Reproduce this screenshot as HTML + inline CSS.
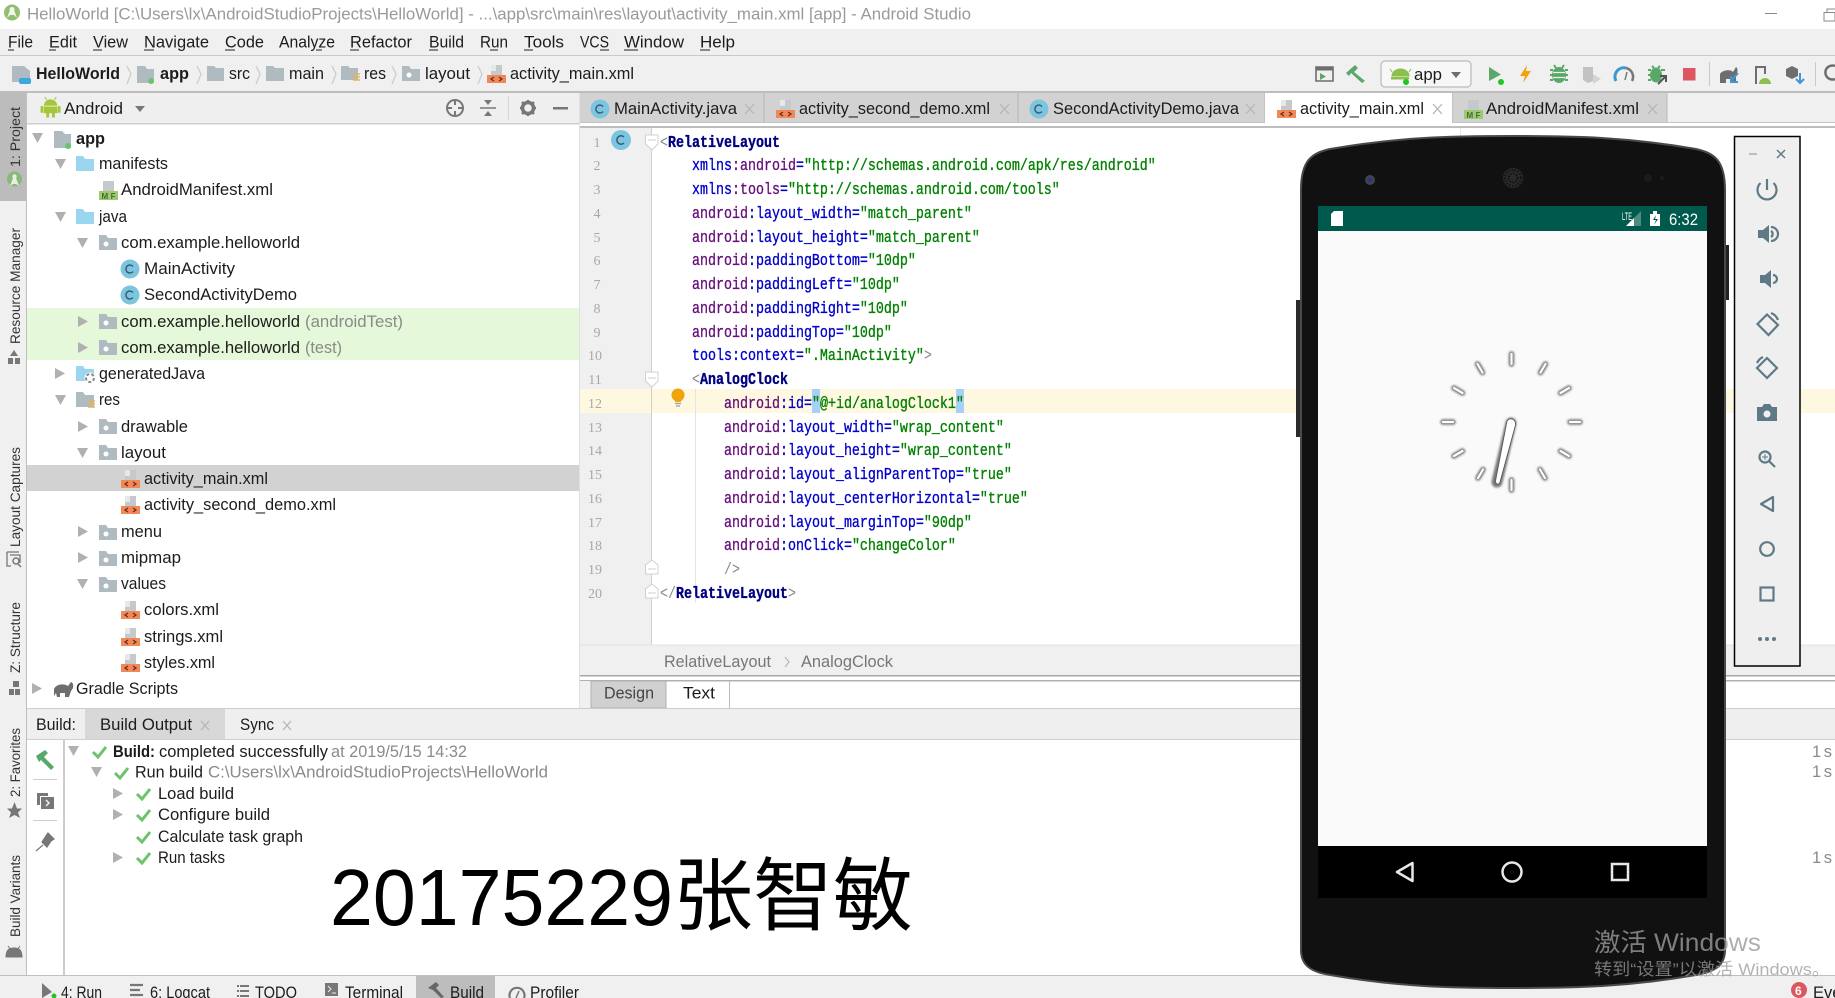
<!DOCTYPE html>
<html><head><meta charset="utf-8"><title>HelloWorld - Android Studio</title>
<style>
html,body{margin:0;padding:0;background:#fff;overflow:hidden}
svg{display:block}
text{font-family:"Liberation Sans","Noto Sans CJK SC",sans-serif;font-size:16.5px;fill:#1c1c1c;white-space:pre}
text:not(.v):not(.ln):not(.k){transform:translateY(-1px)}
.g{fill:#8a8a8a}
.t{font-size:17px}
.b{font-weight:bold}
.ln{font-family:"Liberation Serif",serif;font-size:14px;fill:#a8a8a8;text-anchor:middle}
.v{font-size:14px;fill:#333}
.code text{font-family:"Liberation Mono",monospace;font-size:17px;fill:#000;stroke-width:.35}
.p{fill:#660e7a;stroke:#660e7a}.l{fill:#0000c8;stroke:#0000c8}.s{fill:#008000;stroke:#008000}.n{fill:#000080;stroke:#000080;font-weight:bold}.y{fill:#888;stroke:none}
.x{stroke:#b5b5b5;stroke-width:1.3;fill:none}
.e{fill:none;stroke:#5f7a87;stroke-width:2.2}
.ef{fill:#5f7a87}
</style></head><body>
<svg width="1835" height="998" viewBox="0 0 1835 998" xmlns="http://www.w3.org/2000/svg">
<defs>
<filter id="bl" x="-50%" y="-50%" width="200%" height="200%"><feGaussianBlur stdDeviation="1.1"/></filter>
<g id="dn"><path d="M0 0H11L5.5 10Z" fill="#b0b0b0"/></g>
<g id="rt"><path d="M0 0L10 5.5L0 11Z" fill="#b0b0b0"/></g>
<g id="pk"><path d="M0 0H7L9 3H18V15H0Z" fill="#afbac1"/><circle cx="7" cy="9" r="2.5" fill="#fff"/></g>
<g id="bf"><path d="M0 0H7L9 3H18V15H0Z" fill="#9bd6f0"/></g>
<g id="xm"><path d="M4 0H15V10H4Z" fill="#c6c9cc"/><path d="M9 0H4V6H9Z" fill="#e6e8ea"/><path d="M0 10H19V18H0Z" fill="#f0885a"/><path d="M7 12L4 14L7 16M12 12L15 14L12 16" stroke="#6b2a10" stroke-width="1.2" fill="none"/></g>
<g id="ck"><path d="M1 7L6 12L14 2" stroke="#6cc36b" stroke-width="3" fill="none"/></g>
<g id="cc"><circle r="9.5" fill="#7cc5e0"/><path d="M3 -2.5A4 4 0 1 0 3 2.5" stroke="#3a5a68" stroke-width="1.4" fill="none"/></g>
<g id="an"><path d="M1 7A7 6.5 0 0 1 15 7Z"/><path d="M1 8H15V15H1Z"/><path d="M-2 8H0V14H-2ZM16 8H18V14H16ZM4 15H6V19H4ZM10 15H12V19H10ZM4 1L2 -2M12 1L14 -2" stroke="currentColor" stroke-width="1"/></g>
</defs>

<!-- base -->
<rect width="1835" height="998" fill="#fff"/>
<rect y="29" width="1835" height="64" fill="#f0f0f0"/>
<rect y="55" width="1835" height="1" fill="#c9c9c9"/>
<rect y="91" width="1835" height="2" fill="#bdbdbd"/>

<!-- title -->
<circle cx="12" cy="12.500" r="8" fill="#8fbf6f"/><path d="M7 18L10 10H14L17 18L14 15H10Z" fill="#f2f7ee"/><circle cx="12" cy="9.500" r="2.500" fill="#f2f7ee"/>
<text x="27" y="20.500" textLength="944" lengthAdjust="spacingAndGlyphs" style="fill:#9a9a9a">HelloWorld [C:\Users\lx\AndroidStudioProjects\HelloWorld] - ...\app\src\main\res\layout\activity_main.xml [app] - Android Studio</text>
<rect x="1765" y="13" width="12" height="1" fill="#888"/>
<path d="M1824 12.500H1835V21H1824ZM1827 12V9H1835" fill="none" stroke="#888"/>

<!-- menu -->
<g>
<text x="8" y="48.500" textLength="25" lengthAdjust="spacingAndGlyphs">File</text>
<text x="49" y="48.500" textLength="28" lengthAdjust="spacingAndGlyphs">Edit</text>
<text x="93" y="48.500" textLength="35" lengthAdjust="spacingAndGlyphs">View</text>
<text x="144" y="48.500" textLength="65" lengthAdjust="spacingAndGlyphs">Navigate</text>
<text x="225" y="48.500" textLength="39" lengthAdjust="spacingAndGlyphs">Code</text>
<text x="279" y="48.500" textLength="56" lengthAdjust="spacingAndGlyphs">Analyze</text>
<text x="350" y="48.500" textLength="62" lengthAdjust="spacingAndGlyphs">Refactor</text>
<text x="429" y="48.500" textLength="35" lengthAdjust="spacingAndGlyphs">Build</text>
<text x="480" y="48.500" textLength="28" lengthAdjust="spacingAndGlyphs">Run</text>
<text x="524" y="48.500" textLength="40" lengthAdjust="spacingAndGlyphs">Tools</text>
<text x="580" y="48.500" textLength="29" lengthAdjust="spacingAndGlyphs">VCS</text>
<text x="624" y="48.500" textLength="60" lengthAdjust="spacingAndGlyphs">Window</text>
<text x="700" y="48.500" textLength="35" lengthAdjust="spacingAndGlyphs">Help</text>
<path d="M8 50H14M49 50H56M93 50H102M144 50H154M225 50H235M316 50H322M350 50H359M429 50H438M490 50H498M524 50H533M600 50H609M624 50H638M700 50H710" stroke="#222"/>
</g>

<!-- nav bar -->
<g>
<path d="M12 66H24L30 71V82H12Z" fill="#afbac1"/><rect x="19" y="78" width="12" height="6" rx="2" fill="#3fa7dd"/>
<text x="36" y="80" textLength="84" lengthAdjust="spacingAndGlyphs" class="b">HelloWorld</text>
<path d="M127 66L131 74L127 84" class="x" style="stroke:#ccc"/>
<path d="M137 66H145L147 69H154V83H137Z" fill="#afbac1"/><circle cx="151" cy="81" r="3" fill="#6cc36b"/>
<text x="160" y="80" textLength="29" lengthAdjust="spacingAndGlyphs" class="b">app</text>
<path d="M197 66L201 74L197 84" class="x" style="stroke:#ccc"/>
<path d="M207 66H214L216 68H224V81H207Z" fill="#afbac1"/>
<text x="229" y="80" textLength="21" lengthAdjust="spacingAndGlyphs">src</text>
<path d="M256 66L260 74L256 84" class="x" style="stroke:#ccc"/>
<path d="M266 66H273L275 68H284V81H266Z" fill="#afbac1"/>
<text x="289" y="80" textLength="35" lengthAdjust="spacingAndGlyphs">main</text>
<path d="M332 66L336 74L332 84" class="x" style="stroke:#ccc"/>
<path d="M341 66H348L350 68H358V80H341Z" fill="#afbac1"/><path d="M353 74H360M353 77H360M353 80H360" stroke="#e5b25c" stroke-width="1.500"/>
<text x="364" y="80" textLength="22" lengthAdjust="spacingAndGlyphs">res</text>
<path d="M392 66L396 74L392 84" class="x" style="stroke:#ccc"/>
<use href="#pk" x="402" y="66"/>
<text x="425" y="80" textLength="45" lengthAdjust="spacingAndGlyphs">layout</text>
<path d="M478 66L482 74L478 84" class="x" style="stroke:#ccc"/>
<use href="#xm" x="487" y="65"/>
<text x="510" y="80" textLength="124" lengthAdjust="spacingAndGlyphs">activity_main.xml</text>
</g>

<!-- toolbar right -->
<g>
<path d="M1316 67H1333V81H1316Z" fill="none" stroke="#6e6e6e" stroke-width="1.600"/><rect x="1316" y="67" width="17" height="3.500" fill="#6e6e6e"/><path d="M1320 73L1326 76.500L1320 80Z" fill="#59a869"/>
<path d="M1346 73L1355 65L1358 68L1354 72L1365 81L1362 83L1351 73L1349 76Z" fill="#59a869"/>
<rect x="1381" y="61" width="90" height="26" rx="4" fill="#f7f7f7" stroke="#c4c4c4" stroke-width="1.500"/>
<path d="M1392 76A8.500 7 0 0 1 1409 76Z M1392 72L1390 69M1409 72L1411 69" fill="#8cc04e" stroke="#8cc04e"/><rect x="1391" y="77" width="18" height="2.500" fill="#8cc04e"/><circle cx="1406" cy="82" r="3" fill="#22c522"/>
<text x="1414" y="81" textLength="28" lengthAdjust="spacingAndGlyphs" style="font-size:17px">app</text>
<path d="M1451 72H1461L1456 78Z" fill="#6e6e6e"/>
<path d="M1489 67L1501 74.500L1489 81Z" fill="#59a869"/><circle cx="1501" cy="82" r="3" fill="#22c522"/>
<path d="M1527 65L1520 76H1525L1523 83L1531 71H1526Z" fill="#f0a30a"/>
<ellipse cx="1559" cy="75" rx="7" ry="8" fill="#59a869"/><path d="M1550 70H1553M1565 70H1568M1550 75H1553M1565 75H1568M1550 80H1553M1565 80H1568M1554 65L1556 68M1564 65L1562 68" stroke="#59a869" stroke-width="2"/><path d="M1553 72.500H1565M1553 77.500H1565" stroke="#f0f0f0" stroke-width="1.200"/>
<path d="M1583 67H1593V81L1588 83L1583 80Z" fill="#c2c2c2"/><path d="M1593 74L1601 79L1593 84Z" fill="#d3d3d3"/>
<path d="M1616 81A9 9 0 0 1 1626 68" fill="none" stroke="#3c97d3" stroke-width="3"/><path d="M1626 68A9 9 0 0 1 1632 81" fill="none" stroke="#777" stroke-width="2.500"/><path d="M1625 80L1627 72" stroke="#777" stroke-width="1.500"/>
<ellipse cx="1656" cy="75" rx="6" ry="7.500" fill="#59a869"/><path d="M1648 70H1651M1661 70H1665M1648 75H1651M1648 80H1651M1652 66L1654 68M1660 66L1658 68" stroke="#59a869" stroke-width="2"/><path d="M1658 84L1665 77M1660 76H1666V82" stroke="#555" stroke-width="2" fill="none"/>
<rect x="1683" y="68" width="12.500" height="12.500" fill="#db5860"/>
<rect x="1709" y="62" width="1" height="24" fill="#c9c9c9"/>
<path d="M1720 83V74C1722 70 1731 69 1733 72L1736 67C1738 68 1738 72 1736 76V83H1732V79H1726V83Z" fill="#6e6e6e"/><path d="M1738 73L1731 81M1731 76V82H1738" stroke="#3c97d3" stroke-width="2" fill="none"/>
<path d="M1756 84V67H1765V74" fill="none" stroke="#6e6e6e" stroke-width="2"/><path d="M1759 84A6 6 0 0 1 1771 84Z" fill="#8cc04e"/>
<path d="M1786 69L1792 66L1798 69V76L1792 79L1786 76Z" fill="#6e6e6e"/><path d="M1800 73V83M1796 79L1800 83L1804 79" stroke="#3c97d3" stroke-width="2" fill="none"/>
<rect x="1815" y="62" width="1" height="24" fill="#c9c9c9"/>
<path d="M1835 66A7 7 0 1 0 1835 79" fill="none" stroke="#6e6e6e" stroke-width="2.500"/>
</g>

<!-- left strip -->
<rect y="93" width="27" height="882" fill="#f0f0f0"/>
<rect x="26" y="93" width="1" height="882" fill="#bfbfbf"/>
<rect y="93" width="26" height="108" fill="#bcbcbc"/>
<g>
<text class="v" transform="translate(20,167) rotate(-90)" textLength="60" lengthAdjust="spacingAndGlyphs">1: Project</text>
<circle cx="14.500" cy="179" r="7.500" fill="#8ab77a"/><path d="M10 186L13 178H16L19 186L16 184H13Z" fill="#e8efe2"/><circle cx="14.500" cy="176.500" r="2.200" fill="#e8efe2"/>
<text class="v" transform="translate(20,344) rotate(-90)" textLength="116" lengthAdjust="spacingAndGlyphs">Resource Manager</text>
<path d="M14 350L18 356H10ZM8 358H13V364H8ZM15 358H20V364H15Z" fill="#777"/>
<text class="v" transform="translate(20,547) rotate(-90)" textLength="100" lengthAdjust="spacingAndGlyphs">Layout Captures</text>
<path d="M7 552H19M7 552V566H11M10 555H20V563" fill="none" stroke="#777" stroke-width="1.300"/><circle cx="16" cy="561" r="3" fill="none" stroke="#777" stroke-width="1.500"/><path d="M18 564L21 567" stroke="#777" stroke-width="1.500"/>
<text class="v" transform="translate(20,673) rotate(-90)" textLength="71" lengthAdjust="spacingAndGlyphs">Z: Structure</text>
<path d="M13 681H19V687H13ZM9 689H14V695H9ZM15 689H20V695H15Z" fill="#777"/>
<text class="v" transform="translate(20,797) rotate(-90)" textLength="69" lengthAdjust="spacingAndGlyphs">2: Favorites</text>
<path d="M14.500 802L17 808.500H22L18 812.500L20 818L14.500 815L9 818L11 812.500L7 808.500H12Z" fill="#777"/>
<text class="v" transform="translate(20,937) rotate(-90)" textLength="82" lengthAdjust="spacingAndGlyphs">Build Variants</text>
<path d="M6 957C6 949 10 948 14 948C18 948 22 949 22 957Z M8 946L11 950M20 946L17 950" fill="#777" stroke="#777"/>
</g>

<!-- project panel header -->
<rect x="27" y="93" width="552" height="30" fill="#efefef"/>
<rect x="27" y="123" width="552" height="1.500" fill="#cfcfcf"/>
<g color="#a4c639" fill="#a4c639"><use href="#an" x="41" y="101" transform="translate(4 3) scale(.95)"/></g>
<text x="64" y="115" textLength="59" lengthAdjust="spacingAndGlyphs">Android</text>
<path d="M135 106H145L140 112Z" fill="#777"/>
<circle cx="455" cy="108" r="8" fill="none" stroke="#777" stroke-width="2"/><path d="M455 100V105M455 111V116M447 108H452M458 108H463" stroke="#777" stroke-width="2"/>
<path d="M480 108H496" stroke="#777" stroke-width="1.500"/><path d="M484 100H492L488 105ZM484 116H492L488 111Z" fill="#777"/>
<rect x="508" y="96" width="1" height="24" fill="#d5d5d5"/>
<circle cx="528" cy="108" r="5.500" fill="none" stroke="#777" stroke-width="3.500"/><path d="M528 100V103M528 113V116M520 108H523M533 108H536M522 102L524 104M532 112L534 114M534 102L532 104M524 112L522 114" stroke="#777" stroke-width="2.500"/>
<rect x="553" y="107" width="15" height="2.500" fill="#777"/>

<!-- tree rows bg -->
<rect x="27" y="308" width="552" height="52" fill="#e5f8d9"/>
<rect x="27" y="465" width="552" height="26" fill="#d2d2d2"/>

<!-- tree -->
<g class="tree">
<use href="#dn" x="32" y="133"/>
<path d="M54 131H62L65 134H71V148H54Z" fill="#afbac1"/><circle cx="68" cy="146" r="3" fill="#6cc36b"/>
<text class="t b" x="76" y="145" textLength="29" lengthAdjust="spacingAndGlyphs">app</text>
<use href="#dn" x="55" y="159"/><use href="#bf" x="76" y="156"/>
<text class="t" x="99" y="170" textLength="69" lengthAdjust="spacingAndGlyphs">manifests</text>
<path d="M103 181H114V192H103Z" fill="#c6c9cc"/><rect x="99" y="191" width="19" height="9" fill="#9cca72"/>
<text class="k" x="101.500" y="199" style="font-size:8px;font-weight:bold;fill:#4a6b2d" textLength="14">MF</text>
<text class="t" x="121" y="196" textLength="152" lengthAdjust="spacingAndGlyphs">AndroidManifest.xml</text>
<use href="#dn" x="55" y="212"/><use href="#bf" x="76" y="209"/>
<text class="t" x="99" y="223" textLength="28" lengthAdjust="spacingAndGlyphs">java</text>
<use href="#dn" x="77" y="238"/><use href="#pk" x="99" y="235"/>
<text class="t" x="121" y="249" textLength="179" lengthAdjust="spacingAndGlyphs">com.example.helloworld</text>
<use href="#cc" x="130" y="269"/>
<text class="t" x="144" y="275" textLength="91" lengthAdjust="spacingAndGlyphs">MainActivity</text>
<use href="#cc" x="130" y="295"/>
<text class="t" x="144" y="301" textLength="153" lengthAdjust="spacingAndGlyphs">SecondActivityDemo</text>
<use href="#rt" x="78" y="316"/><use href="#pk" x="99" y="314"/>
<text class="t" x="121" y="328" textLength="179" lengthAdjust="spacingAndGlyphs">com.example.helloworld</text>
<text class="t g" x="305" y="328" textLength="98" lengthAdjust="spacingAndGlyphs">(androidTest)</text>
<use href="#rt" x="78" y="342"/><use href="#pk" x="99" y="340"/>
<text class="t" x="121" y="354" textLength="179" lengthAdjust="spacingAndGlyphs">com.example.helloworld</text>
<text class="t g" x="305" y="354" textLength="37" lengthAdjust="spacingAndGlyphs">(test)</text>
<use href="#rt" x="55" y="368"/><use href="#bf" x="76" y="366"/><circle cx="90" cy="378" r="5.500" fill="#fff"/><circle cx="90" cy="378" r="4" fill="none" stroke="#888" stroke-width="2" stroke-dasharray="3 2"/>
<text class="t" x="99" y="380" textLength="106" lengthAdjust="spacingAndGlyphs">generatedJava</text>
<use href="#dn" x="55" y="395"/><path d="M76 392H83L85 395H94V407H76Z" fill="#afbac1"/><path d="M88 401H95M88 404H95M88 407H95" stroke="#e5b25c" stroke-width="1.500"/>
<text class="t" x="99" y="406" textLength="21" lengthAdjust="spacingAndGlyphs">res</text>
<use href="#rt" x="78" y="421"/><use href="#pk" x="99" y="419"/>
<text class="t" x="121" y="433" textLength="67" lengthAdjust="spacingAndGlyphs">drawable</text>
<use href="#dn" x="77" y="448"/><use href="#pk" x="99" y="445"/>
<text class="t" x="121" y="459" textLength="45" lengthAdjust="spacingAndGlyphs">layout</text>
<use href="#xm" x="121" y="470"/>
<text class="t" x="144" y="485" textLength="124" lengthAdjust="spacingAndGlyphs">activity_main.xml</text>
<use href="#xm" x="121" y="496"/>
<text class="t" x="144" y="511" textLength="192" lengthAdjust="spacingAndGlyphs">activity_second_demo.xml</text>
<use href="#rt" x="78" y="526"/><use href="#pk" x="99" y="525"/>
<text class="t" x="121" y="538" textLength="41" lengthAdjust="spacingAndGlyphs">menu</text>
<use href="#rt" x="78" y="552"/><use href="#pk" x="99" y="551"/>
<text class="t" x="121" y="564" textLength="60" lengthAdjust="spacingAndGlyphs">mipmap</text>
<use href="#dn" x="77" y="579"/><use href="#pk" x="99" y="577"/>
<text class="t" x="121" y="590" textLength="45" lengthAdjust="spacingAndGlyphs">values</text>
<use href="#xm" x="121" y="601"/>
<text class="t" x="144" y="616" textLength="75" lengthAdjust="spacingAndGlyphs">colors.xml</text>
<use href="#xm" x="121" y="628"/>
<text class="t" x="144" y="643" textLength="79" lengthAdjust="spacingAndGlyphs">strings.xml</text>
<use href="#xm" x="121" y="654"/>
<text class="t" x="144" y="669" textLength="71" lengthAdjust="spacingAndGlyphs">styles.xml</text>
<use href="#rt" x="32" y="683"/>
<path d="M54 696V689C56 684 64 683 68 686L71 682C74 683 74 688 71 691L69 697H65V693H60V697H57L56 693Z" fill="#6e6e6e"/>
<text class="t" x="76" y="695" textLength="102" lengthAdjust="spacingAndGlyphs">Gradle Scripts</text>
</g>

<!-- editor tabs -->
<rect x="579" y="93" width="1256" height="30" fill="#f0f0f0"/>
<rect x="579" y="93" width="1" height="615" fill="#e0e0e0"/>
<rect x="580" y="93" width="184" height="29" fill="#d2d2d2"/>
<rect x="764" y="93" width="254" height="29" fill="#d2d2d2"/>
<rect x="1018" y="93" width="247" height="29" fill="#d2d2d2"/>
<rect x="1452" y="93" width="215" height="29" fill="#d2d2d2"/>
<path d="M764 93V122M1018 93V122M1265 93V122M1452 93V122M1667 93V122" stroke="#b5b5b5"/>
<rect x="580" y="122" width="1255" height="1" fill="#c4c4c4"/>
<rect x="580" y="126" width="1255" height="2" fill="#bdbdbd"/>
<rect x="1265" y="93" width="187" height="33" fill="#fff"/>
<use href="#cc" x="600" y="109"/>
<text x="614" y="115" textLength="123" lengthAdjust="spacingAndGlyphs" class="t">MainActivity.java</text>
<path d="M745 104L754 114M754 104L745 114" class="x"/>
<use href="#xm" x="776" y="100"/>
<text x="799" y="115" textLength="191" lengthAdjust="spacingAndGlyphs" class="t">activity_second_demo.xml</text>
<path d="M1000 104L1009 114M1009 104L1000 114" class="x"/>
<use href="#cc" x="1039" y="109"/>
<text x="1053" y="115" textLength="186" lengthAdjust="spacingAndGlyphs" class="t">SecondActivityDemo.java</text>
<path d="M1246 104L1255 114M1255 104L1246 114" class="x"/>
<use href="#xm" x="1277" y="100"/>
<text x="1300" y="115" textLength="124" lengthAdjust="spacingAndGlyphs" class="t">activity_main.xml</text>
<path d="M1433 104L1442 114M1442 104L1433 114" class="x"/>
<path d="M1468 100H1479V110H1468Z" fill="#c6c9cc"/><rect x="1464" y="110" width="19" height="9" fill="#9cca72"/>
<text class="k" x="1466.500" y="118" style="font-size:8px;font-weight:bold;fill:#4a6b2d" textLength="14">MF</text>
<text x="1486" y="115" textLength="153" lengthAdjust="spacingAndGlyphs" class="t">AndroidManifest.xml</text>
<path d="M1648 104L1657 114M1657 104L1648 114" class="x"/>

<!-- editor -->
<rect x="580" y="128" width="71" height="517" fill="#f0f0f0"/>
<rect x="651" y="128" width="1" height="517" fill="#d0d0d0"/>
<rect x="580" y="389" width="71" height="24" fill="#fff8e1"/>
<rect x="652" y="389" width="1183" height="24" fill="#fff8e1"/>
<rect x="1460" y="128" width="1" height="517" fill="#e8e8e8"/>
<rect x="695" y="389" width="1" height="214" fill="#e4e4e4"/>
<g>
<text class="ln" x="597" y="147">1</text><text class="ln" x="597" y="170">2</text><text class="ln" x="597" y="194">3</text><text class="ln" x="597" y="218">4</text><text class="ln" x="597" y="242">5</text><text class="ln" x="597" y="265">6</text><text class="ln" x="597" y="289">7</text><text class="ln" x="597" y="313">8</text><text class="ln" x="597" y="337">9</text><text class="ln" x="595" y="360">10</text><text class="ln" x="595" y="384">11</text><text class="ln" x="595" y="408">12</text><text class="ln" x="595" y="432">13</text><text class="ln" x="595" y="455">14</text><text class="ln" x="595" y="479">15</text><text class="ln" x="595" y="503">16</text><text class="ln" x="595" y="527">17</text><text class="ln" x="595" y="550">18</text><text class="ln" x="595" y="574">19</text><text class="ln" x="595" y="598">20</text>
</g>
<g><circle cx="621" cy="140" r="10" fill="#7cc5e0"/><path d="M624 137A4.200 4.200 0 1 0 624 143" stroke="#3a5a68" stroke-width="1.500" fill="none"/></g>
<g fill="#fff" stroke="#d0d0d0">
<path d="M645.500 135H658V144L652 150L645.500 144Z"/><path d="M648 140H656" />
<path d="M645.500 372H658V381L652 387L645.500 381Z"/><path d="M648 378H656"/>
<path d="M645.500 574H658V565L652 560L645.500 565Z"/><path d="M648 569H656"/>
<path d="M645.500 598H658V589L652 584L645.500 589Z"/><path d="M648 593H656"/>
</g>
<rect x="812" y="389" width="8" height="24" fill="#a6d0f7"/><rect x="956" y="389" width="8" height="24" fill="#a6d0f7"/>
<circle cx="678" cy="395" r="6.500" fill="#f0a30a"/><path d="M675 399H681V402H675Z" fill="#f0a30a"/><path d="M675 403.500H681M676 406H680" stroke="#999" stroke-width="1.300"/>

<g class="code" transform="translate(660,0) scale(.7843,1)">
<text class="k" y="147"><tspan class="y">&lt;</tspan><tspan class="n">RelativeLayout</tspan></text>
<text class="k" x="40.800" y="170"><tspan class="l">xmlns</tspan><tspan class="p">:android</tspan><tspan class="l">=</tspan><tspan class="s">"http://schemas.android.com/apk/res/android"</tspan></text>
<text class="k" x="40.800" y="194"><tspan class="l">xmlns</tspan><tspan class="p">:tools</tspan><tspan class="l">=</tspan><tspan class="s">"http://schemas.android.com/tools"</tspan></text>
<text class="k" x="40.800" y="218"><tspan class="p">android</tspan><tspan class="l">:layout_width=</tspan><tspan class="s">"match_parent"</tspan></text>
<text class="k" x="40.800" y="242"><tspan class="p">android</tspan><tspan class="l">:layout_height=</tspan><tspan class="s">"match_parent"</tspan></text>
<text class="k" x="40.800" y="265"><tspan class="p">android</tspan><tspan class="l">:paddingBottom=</tspan><tspan class="s">"10dp"</tspan></text>
<text class="k" x="40.800" y="289"><tspan class="p">android</tspan><tspan class="l">:paddingLeft=</tspan><tspan class="s">"10dp"</tspan></text>
<text class="k" x="40.800" y="313"><tspan class="p">android</tspan><tspan class="l">:paddingRight=</tspan><tspan class="s">"10dp"</tspan></text>
<text class="k" x="40.800" y="337"><tspan class="p">android</tspan><tspan class="l">:paddingTop=</tspan><tspan class="s">"10dp"</tspan></text>
<text class="k" x="40.800" y="360"><tspan class="l">tools</tspan><tspan class="l">:context=</tspan><tspan class="s">".MainActivity"</tspan><tspan class="y">&gt;</tspan></text>
<text class="k" x="40.800" y="384"><tspan class="y">&lt;</tspan><tspan class="n">AnalogClock</tspan></text>
<text class="k" x="81.600" y="408"><tspan class="p">android</tspan><tspan class="l">:id=</tspan><tspan class="s">"@+id/analogClock1"</tspan></text>
<text class="k" x="81.600" y="432"><tspan class="p">android</tspan><tspan class="l">:layout_width=</tspan><tspan class="s">"wrap_content"</tspan></text>
<text class="k" x="81.600" y="455"><tspan class="p">android</tspan><tspan class="l">:layout_height=</tspan><tspan class="s">"wrap_content"</tspan></text>
<text class="k" x="81.600" y="479"><tspan class="p">android</tspan><tspan class="l">:layout_alignParentTop=</tspan><tspan class="s">"true"</tspan></text>
<text class="k" x="81.600" y="503"><tspan class="p">android</tspan><tspan class="l">:layout_centerHorizontal=</tspan><tspan class="s">"true"</tspan></text>
<text class="k" x="81.600" y="527"><tspan class="p">android</tspan><tspan class="l">:layout_marginTop=</tspan><tspan class="s">"90dp"</tspan></text>
<text class="k" x="81.600" y="550"><tspan class="p">android</tspan><tspan class="l">:onClick=</tspan><tspan class="s">"changeColor"</tspan></text>
<text class="k" x="81.600" y="574"><tspan class="y">/&gt;</tspan></text>
<text class="k" y="598"><tspan class="y">&lt;/</tspan><tspan class="n">RelativeLayout</tspan><tspan class="y">&gt;</tspan></text>
</g>

<!-- breadcrumb + design tabs -->
<rect x="580" y="645" width="1255" height="30" fill="#f0f0f0"/>
<rect x="580" y="644.500" width="1255" height="1" fill="#e2e2e2"/>
<text x="664" y="668" textLength="107" lengthAdjust="spacingAndGlyphs" style="fill:#777" class="t">RelativeLayout</text>
<path d="M785 657L789 662L785 667" fill="none" stroke="#aaa"/>
<text x="801" y="668" textLength="92" lengthAdjust="spacingAndGlyphs" style="fill:#777" class="t">AnalogClock</text>
<rect x="580" y="675" width="1255" height="1.500" fill="#a8a8a8"/>
<rect x="580" y="680" width="1255" height="1.500" fill="#b0b0b0"/>
<rect x="580" y="681" width="11" height="27" fill="#f0f0f0"/>
<rect x="591" y="681" width="75" height="27" fill="#d0d0d0" stroke="#b0b0b0"/>
<text x="604" y="699.500" textLength="50" lengthAdjust="spacingAndGlyphs" class="t" style="fill:#444">Design</text>
<rect x="729" y="681" width="1" height="27" fill="#bbb"/>
<text x="683" y="699.500" textLength="32" lengthAdjust="spacingAndGlyphs" class="t">Text</text>

<!-- build panel -->
<rect x="27" y="708" width="1808" height="1.500" fill="#cdcdcd"/>
<rect x="27" y="709" width="1808" height="30" fill="#efefef"/>
<rect x="27" y="739" width="1808" height="1" fill="#cfcfcf"/>
<rect x="85" y="709" width="140" height="30" fill="#d8d8d8"/>
<text x="36" y="731" textLength="40" lengthAdjust="spacingAndGlyphs">Build:</text>
<text x="100" y="731" textLength="92" lengthAdjust="spacingAndGlyphs">Build Output</text>
<path d="M201 721L209 730M209 721L201 730" class="x"/>
<text x="240" y="731" textLength="34" lengthAdjust="spacingAndGlyphs">Sync</text>
<path d="M283 721L291 730M291 721L283 730" class="x"/>
<rect x="63" y="740" width="2" height="235" fill="#cdcdcd"/>
<path d="M36 756L45 750L48 753L44 757L54 767L51 770L41 760L39 762Z" fill="#59a869"/>
<rect x="33" y="779" width="24" height="1" fill="#ccc"/>
<path d="M37 793H48V796H40V805H37Z" fill="#777"/><rect x="41" y="797" width="13" height="12" fill="#777"/><path d="M46 800L49 803L46 806" stroke="#eee" fill="none" stroke-width="1.500"/>
<rect x="33" y="820" width="24" height="1" fill="#ccc"/>
<path d="M48 833L54 839L51 841L47 847L42 842L46 836ZM43 845L36 851" fill="#777" stroke="#777" stroke-width="1.200"/>

<use href="#dn" x="68" y="746"/><use href="#ck" x="92" y="745"/>
<text x="113" y="758" textLength="42" lengthAdjust="spacingAndGlyphs" class="b">Build:</text>
<text x="159" y="758" textLength="169" lengthAdjust="spacingAndGlyphs">completed successfully</text>
<text x="331" y="758" textLength="136" lengthAdjust="spacingAndGlyphs" class="g">at 2019/5/15 14:32</text>
<use href="#dn" x="91" y="767"/><use href="#ck" x="114" y="766"/>
<text x="135" y="778.500" textLength="68" lengthAdjust="spacingAndGlyphs">Run build</text>
<text x="208" y="778.500" textLength="340" lengthAdjust="spacingAndGlyphs" class="g">C:\Users\lx\AndroidStudioProjects\HelloWorld</text>
<use href="#rt" x="113" y="788"/><use href="#ck" x="136" y="787"/>
<text x="158" y="800" textLength="76" lengthAdjust="spacingAndGlyphs">Load build</text>
<use href="#rt" x="113" y="809"/><use href="#ck" x="136" y="808"/>
<text x="158" y="821" textLength="112" lengthAdjust="spacingAndGlyphs">Configure build</text>
<use href="#ck" x="136" y="830"/>
<text x="158" y="843" textLength="145" lengthAdjust="spacingAndGlyphs">Calculate task graph</text>
<use href="#rt" x="113" y="852"/><use href="#ck" x="136" y="851"/>
<text x="158" y="864" textLength="67" lengthAdjust="spacingAndGlyphs">Run tasks</text>
<text x="1812" y="758" textLength="20" class="g">1 s</text>
<text x="1812" y="778" textLength="20" class="g">1 s</text>
<text x="1812" y="864" textLength="20" class="g">1 s</text>

<text class="k" x="330" y="925" textLength="343" lengthAdjust="spacingAndGlyphs" style="font-size:80px;fill:#000">20175229</text>
<text class="k" x="673" y="924" textLength="240" style="font-size:80px;fill:#000;font-family:'Noto Sans CJK SC',sans-serif">张智敏</text>

<!-- status bar -->
<rect y="975" width="1835" height="23" fill="#f0f0f0"/>
<rect y="975" width="1835" height="1" fill="#bfbfbf"/>
<rect x="416" y="976" width="79" height="22" fill="#bdbdbd"/>
<path d="M42 983L52 992L42 998Z" fill="#777"/><circle cx="54" cy="996" r="2.500" fill="#22c522"/>
<text class="k" x="61" y="998" textLength="41" lengthAdjust="spacingAndGlyphs">4: Run</text>
<path d="M130 985H143M130 990H140M130 995H143" stroke="#777" stroke-width="2.200"/>
<text class="k" x="150" y="998" textLength="60" lengthAdjust="spacingAndGlyphs">6: Logcat</text>
<path d="M237 986H249M237 991H249M237 996H249" stroke="#777" stroke-width="2" stroke-dasharray="2 1 9"/>
<text class="k" x="255" y="998" textLength="42" lengthAdjust="spacingAndGlyphs">TODO</text>
<rect x="325" y="983" width="13" height="13" fill="#777"/><path d="M328 986L331 989L328 992M332 993H336" stroke="#eee" fill="none"/>
<text class="k" x="345" y="998" textLength="58" lengthAdjust="spacingAndGlyphs">Terminal</text>
<path d="M428 988L436 982L439 985L436 988L444 997L441 998L433 990Z" fill="#666"/>
<text class="k" x="450" y="998" textLength="34" lengthAdjust="spacingAndGlyphs">Build</text>
<path d="M510 998A7.500 7.500 0 1 1 524 998" fill="none" stroke="#777" stroke-width="2.200"/><path d="M516 998L519 991" stroke="#777" stroke-width="1.500"/>
<text class="k" x="530" y="998" textLength="49" lengthAdjust="spacingAndGlyphs">Profiler</text>
<circle cx="1799" cy="990" r="8" fill="#db5860"/>
<text class="k" x="1795" y="995" style="font-size:12px;fill:#fff;font-weight:bold">6</text>
<text class="k" x="1813" y="998">Eve</text>

<!-- phone -->
<rect x="1296" y="300" width="6" height="137" fill="#2a2a2a"/>
<rect x="1724" y="245" width="5" height="55" fill="#222"/>
<path d="M1301 190C1301 160 1312 153 1330 149C1400 137 1450 136 1513 136C1576 136 1626 137 1696 149C1714 153 1725 160 1725 190V950C1725 966 1714 972 1696 975C1626 987 1576 988 1513 988C1450 988 1400 987 1330 975C1312 972 1301 966 1301 950Z" fill="#111" stroke="#4a4a4a" stroke-width="2"/>
<circle cx="1370" cy="180" r="5" fill="#444"/><circle cx="1370" cy="180" r="2.500" fill="#2a3488"/>
<circle cx="1513" cy="178" r="10" fill="#2a2a2a"/><circle cx="1513" cy="178" r="8" fill="none" stroke="#111" stroke-width="2" stroke-dasharray="1.500 1.500"/><circle cx="1513" cy="178" r="4.500" fill="none" stroke="#111" stroke-width="2" stroke-dasharray="1.500 1.500"/>
<circle cx="1648" cy="178" r="4" fill="#1c1c1c"/><circle cx="1662" cy="178" r="2" fill="#1c1c1c"/>
<rect x="1318" y="206" width="389" height="25" fill="#00594d"/>
<rect x="1318" y="231" width="389" height="615" fill="#fafafa"/>
<rect x="1318" y="846" width="389" height="52" fill="#000"/>
<path d="M1334 211H1343V226H1331V214Z" fill="#fff"/>
<text class="k" x="1622" y="220" style="font-size:11px;fill:#fff" textLength="10" lengthAdjust="spacingAndGlyphs">LTE</text>
<path d="M1641 211V226H1626Z" fill="#4d8a80"/><path d="M1634 218V226H1626Z" fill="#fff"/>
<path d="M1650 214H1653V211H1657V214H1660V226H1650Z" fill="#fff"/><path d="M1656 215L1653 220H1656L1654 225L1658 219H1655Z" fill="#00594d"/>
<text class="k" x="1669" y="225" textLength="29" lengthAdjust="spacingAndGlyphs" style="font-size:17px;fill:#fff">6:32</text>
<path d="M1412.500 863V881L1397 872Z" fill="none" stroke="#e8e8e8" stroke-width="2.500" stroke-linejoin="round"/>
<circle cx="1512" cy="872" r="9.500" fill="none" stroke="#e8e8e8" stroke-width="2.500"/>
<rect x="1612" y="864" width="16" height="16" fill="none" stroke="#e8e8e8" stroke-width="2.500"/>

<!-- clock -->
<g>
<g filter="url(#bl)" stroke="#777" stroke-width="5.500" stroke-linecap="round" fill="none">
<path d="M1511.500 354V364M1511.500 480V490M1443 422H1453M1570 422H1580M1477.500 364L1482.500 372.500M1545.500 364L1540.500 372.500M1454 388L1462.500 393M1569 388L1560.500 393M1454 456L1462.500 451M1569 456L1560.500 451M1478 478L1483 469.500M1545 478L1540 469.500"/>
<path d="M1511 423L1497 482" stroke-width="11"/>
</g>
<g stroke="#fff" stroke-width="2.200" stroke-linecap="round" fill="none">
<path d="M1511.500 354V364M1511.500 480V490M1443 422H1453M1570 422H1580M1477.500 364L1482.500 372.500M1545.500 364L1540.500 372.500M1454 388L1462.500 393M1569 388L1560.500 393M1454 456L1462.500 451M1569 456L1560.500 451M1478 478L1483 469.500M1545 478L1540 469.500"/>
</g>
<path d="M1507 421C1510 417 1516 419 1515.500 425L1500 482C1499 485 1496 485 1495.500 481Z" fill="#fff" stroke="#555" stroke-width=".8"/>
</g>

<!-- emulator toolbar -->
<rect x="1734.500" y="136.500" width="65.500" height="529.500" fill="#efefef" stroke="#000" stroke-width="1.500"/>
<path d="M1749 154H1757" stroke="#9fb0b8" stroke-width="1.500"/><path d="M1777 150L1785 158M1785 150L1777 158" stroke="#5f7a87" stroke-width="1.500"/>
<path d="M1760.500 183A9.500 9.500 0 1 0 1773.500 183" class="e" stroke-width="2.500"/><path d="M1767 179V190" class="e" stroke-width="2.500"/>
<path d="M1758 230H1763L1769 225V243L1763 238H1758Z" class="ef"/><path d="M1771 227A7 7 0 0 1 1771 241" class="e" stroke-width="2.500"/><path d="M1771 231A3.500 3.500 0 0 1 1771 237" class="e"/>
<path d="M1760 275H1765L1771 270V288L1765 283H1760Z" class="ef"/><path d="M1773 275A4 4 0 0 1 1773 283" class="e"/>
<path d="M1757.500 324L1767 314.500L1778 325L1768.500 335Z" class="e" stroke-width="3"/><path d="M1771 313A12 12 0 0 1 1778 320" class="e" stroke-width="1.300"/>
<path d="M1757 368L1767 358L1777 368L1767 378Z" class="e" stroke-width="3"/><path d="M1757 363A12 12 0 0 1 1763 357" class="e" stroke-width="1.300"/>
<path d="M1757 407H1762L1764 404H1770L1772 407H1777V421H1757Z" class="ef"/><circle cx="1767" cy="414" r="3.500" fill="#efefef"/>
<circle cx="1765" cy="457" r="5.500" class="e" stroke-width="1.800"/><path d="M1769 461L1775 467" class="e" stroke-width="2"/><path d="M1762 457H1768M1765 454V460" stroke="#5f7a87"/>
<path d="M1773 497V511L1761 504Z" class="e" stroke-linejoin="round"/>
<circle cx="1767" cy="549" r="6.800" class="e"/>
<rect x="1760.500" y="587.500" width="13" height="13" class="e"/>
<circle cx="1760" cy="639" r="2" class="ef"/><circle cx="1767" cy="639" r="2" class="ef"/><circle cx="1774" cy="639" r="2" class="ef"/>

<!-- watermark -->
<text class="k" x="1594" y="951" textLength="167" lengthAdjust="spacingAndGlyphs" style="font-size:25px;fill:#9a9a9a;fill-opacity:.8">激活 Windows</text>
<text class="k" x="1594" y="975" textLength="236" lengthAdjust="spacingAndGlyphs" style="font-size:17px;fill:#9a9a9a;fill-opacity:.75">转到“设置”以激活 Windows。</text>
</svg>
</body></html>
